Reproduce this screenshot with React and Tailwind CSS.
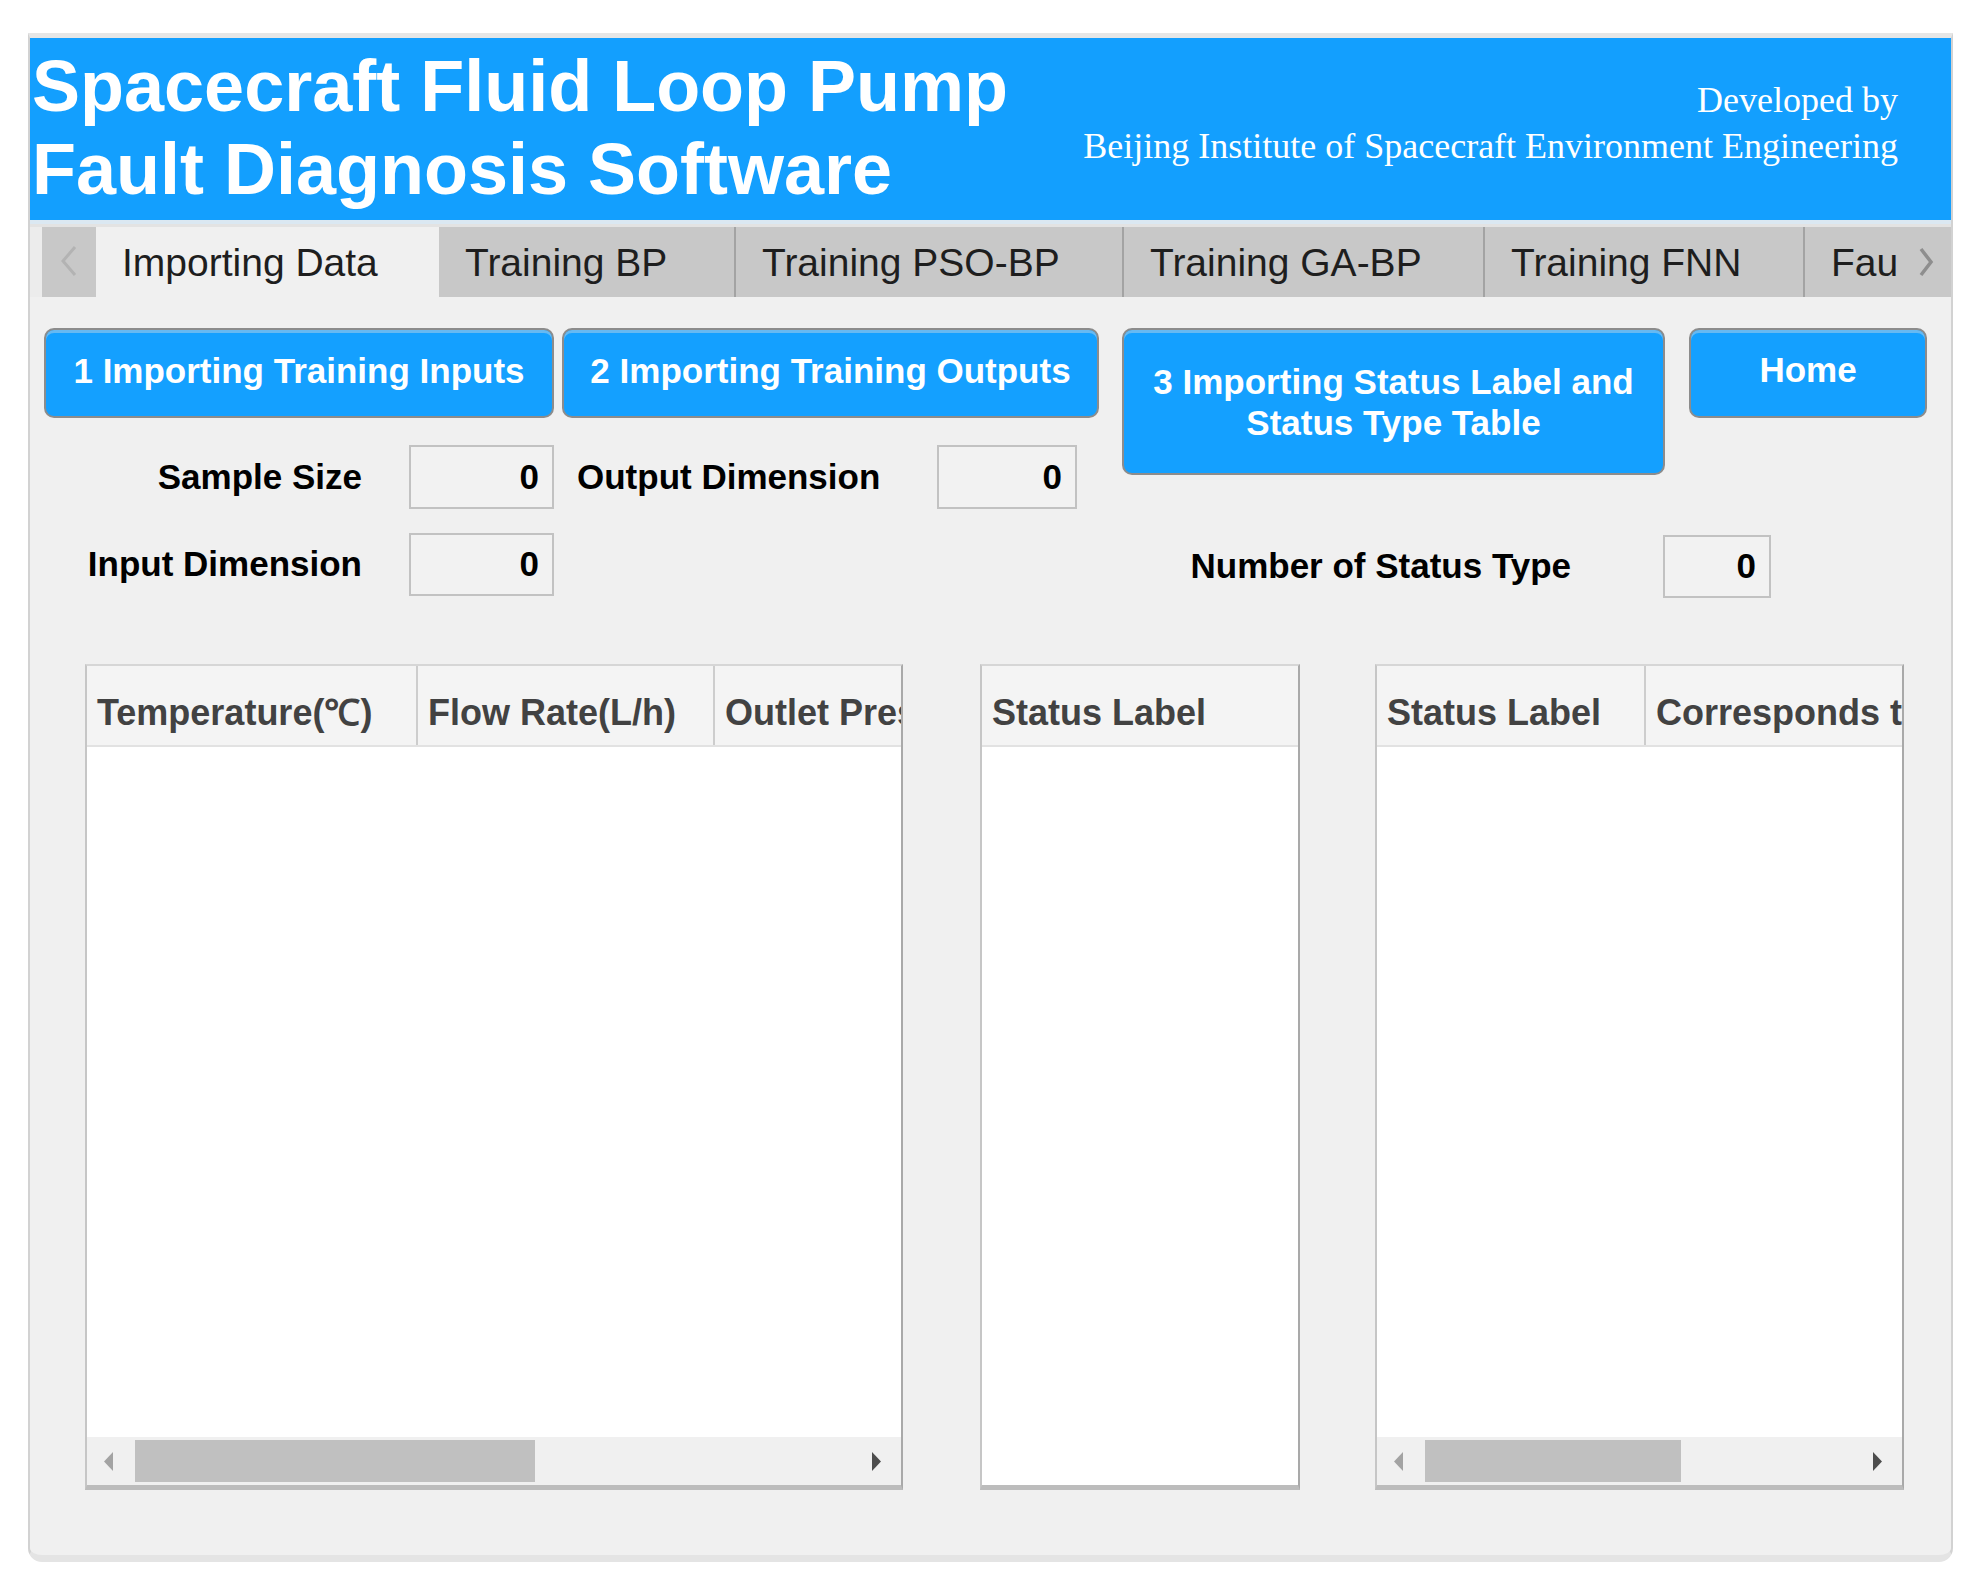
import React from "react";

const sans = { fontFamily: '"Liberation Sans", Arial, sans-serif' };

const tabs = [
  { label: "Importing Data", w: "w-[343px]", active: true },
  { label: "Training BP", w: "w-[295px]" },
  { label: "Training PSO-BP", w: "w-[388px]", divider: true },
  { label: "Training GA-BP", w: "w-[361px]", divider: true },
  { label: "Training FNN", w: "w-[320px]", divider: true },
];

const BlueButton = ({ className, children }) => (
  <div
    className={
      "flex items-center justify-center rounded-[10px] border-2 border-[#8c8c8c] bg-[#14a0ff] text-center text-[35px] font-bold text-white shadow-[inset_0_3px_0_#66b9f2] " +
      className
    }
  >
    {children}
  </div>
);

const NumBox = ({ className }) => (
  <div
    className={
      "flex items-center justify-end border-2 border-[#c2c2c2] bg-[#f2f2f2] pr-[13px] text-[35px] font-bold text-black " +
      className
    }
  >
    0
  </div>
);

const ScrollBar = ({ thumb }) => (
  <div className="flex h-[48px] items-center bg-[#f0f0f0]">
    <svg width="10" height="23" viewBox="0 0 10 23" className="ml-[17px] shrink-0">
      <polygon points="9,2 0,11.5 9,21" fill="#a3a3a3" />
    </svg>
    <div className={"ml-[21px] h-[42px] bg-[#c0c0c0] " + thumb} />
    <div className="flex-1" />
    <svg width="10" height="23" viewBox="0 0 10 23" className="mr-[20px] shrink-0">
      <polygon points="1,2 10,11.5 1,21" fill="#4d4d4d" />
    </svg>
  </div>
);

const Table = ({ className, cols, last, thumb }) => (
  <div
    className={
      "flex h-[826px] flex-col border-l-2 border-t-2 border-r-2 border-b-[5px] border-l-[#c6c6c6] border-t-[#d6d6d6] border-r-[#a9a9a9] border-b-[#bcbcbc] bg-white " +
      className
    }
  >
    <div className="flex h-[81px] shrink-0 border-b-2 border-[#e2e2e2] bg-[#f4f4f4] text-[36px] font-bold text-[#424242]">
      {cols.map((c) => (
        <div
          key={c.label}
          className={"flex shrink-0 items-center overflow-hidden whitespace-nowrap border-r-2 border-[#cdcdcd] pl-[10px] pt-[14px] " + c.w}
        >
          {c.label}
        </div>
      ))}
      {last && (
        <div className="flex min-w-0 flex-1 items-center overflow-hidden whitespace-nowrap pl-[10px] pt-[14px]">
          {last}
        </div>
      )}
    </div>
    <div className="flex-1 bg-white" />
    {thumb && <ScrollBar thumb={thumb} />}
  </div>
);

export default function App() {
  return (
    <div className="h-[1589px] w-[1983px] bg-white pl-[28px] pt-[33px]" style={sans}>
      <div className="flex h-[1529px] w-[1925px] flex-col overflow-hidden rounded-b-[14px] border-x-2 border-b-[7px] border-t-[5px] border-x-[#d2d2d2] border-b-[#e4e4e4] border-t-[#e6e6e6] bg-[#f0f0f0]">
        {/* Title bar */}
        <div className="flex h-[182px] shrink-0 justify-between bg-[#139ffe] text-white">
          <div className="pl-[2px] pt-[7px] text-[72px] font-bold leading-[83px]">
            <div>Spacecraft Fluid Loop Pump</div>
            <div>Fault Diagnosis Software</div>
          </div>
          <div
            className="pr-[53px] pt-[39px] text-right text-[36px] leading-[46px]"
            style={{ fontFamily: '"Liberation Serif", "Times New Roman", serif' }}
          >
            <div>Developed by</div>
            <div>Beijing Institute of Spacecraft Environment Engineering</div>
          </div>
        </div>

        {/* Tabs */}
        <div className="h-[7px] shrink-0 border-t-4 border-[#dbe8f2] bg-[#e3e3e3]" />
        <div className="flex h-[70px] shrink-0 bg-[#c8c8c8] pl-[12px]" style={{ boxShadow: "inset 12px 0 0 #ececec" }}>
          <div className="flex h-[68px] w-[54px] shrink-0 items-center justify-center bg-[#c8c8c8]">
            <svg width="20" height="34" viewBox="0 0 20 34">
              <polyline points="16,3 4,17 16,31" fill="none" stroke="#b3b3b3" strokeWidth="3" />
            </svg>
          </div>
          {tabs.map((t) => (
            <div
              key={t.label}
              className={
                "flex shrink-0 items-center whitespace-nowrap pl-[26px] pt-[3px] text-[39px] text-[#1e1e1e] " +
                t.w +
                (t.active ? " bg-[#f0f0f0]" : " bg-[#c8c8c8]") +
                (t.divider ? " border-l-2 border-[#a3a3a3]" : "")
              }
            >
              {t.label}
            </div>
          ))}
          <div className="flex min-w-0 flex-1 items-center overflow-hidden whitespace-nowrap border-l-2 border-[#a3a3a3] pl-[26px] pt-[3px] text-[39px] text-[#1e1e1e]">
            Fault Diagnosis
          </div>
          <div className="flex w-[54px] shrink-0 items-center bg-[#c8c8c8] pl-[20px]">
            <svg width="18" height="32" viewBox="0 0 18 32">
              <polyline points="4,3 14,16 4,29" fill="none" stroke="#8e8e8e" strokeWidth="3.5" />
            </svg>
          </div>
        </div>

        {/* Content */}
        <div className="flex flex-1 flex-col pl-[14px] pt-[31px]">
          <div className="flex items-start">
            {/* left block */}
            <div className="flex w-[1055px] flex-col">
              <div className="flex gap-[8px]">
                <BlueButton className="h-[90px] w-[510px] pb-[3px]">1 Importing Training Inputs</BlueButton>
                <BlueButton className="h-[90px] w-[537px] pb-[3px]">2 Importing Training Outputs</BlueButton>
              </div>
              <div className="mt-[27px] flex items-center text-[35px] font-bold text-black">
                <div className="w-[318px] text-right">Sample Size</div>
                <NumBox className="ml-[47px] h-[64px] w-[145px]" />
                <div className="ml-[23px] w-[360px]">Output Dimension</div>
                <NumBox className="h-[64px] w-[140px]" />
              </div>
              <div className="mt-[24px] flex items-center text-[35px] font-bold text-black">
                <div className="w-[318px] text-right">Input Dimension</div>
                <NumBox className="ml-[47px] h-[63px] w-[145px]" />
              </div>
            </div>
            {/* right block */}
            <div className="ml-[23px] flex flex-col">
              <div className="flex items-start gap-[24px]">
                <BlueButton className="h-[147px] w-[543px] leading-[41px]">
                  <div>
                    <div>3 Importing Status Label and</div>
                    <div>Status Type Table</div>
                  </div>
                </BlueButton>
                <BlueButton className="h-[90px] w-[238px] pb-[6px]">Home</BlueButton>
              </div>
              <div className="mt-[60px] flex items-center text-[35px] font-bold text-black">
                <div className="w-[449px] text-right">Number of Status Type</div>
                <NumBox className="ml-[92px] h-[63px] w-[108px]" />
              </div>
            </div>
          </div>

          {/* Tables */}
          <div className="ml-[41px] mt-[66px] flex">
            <Table
              className="w-[818px]"
              cols={[
                { label: "Temperature(℃)", w: "w-[331px]" },
                { label: "Flow Rate(L/h)", w: "w-[297px]" },
              ]}
              last="Outlet Pressure(kPa)"
              thumb="w-[400px]"
            />
            <Table className="ml-[77px] w-[320px]" cols={[]} last="Status Label" />
            <Table
              className="ml-[75px] w-[529px]"
              cols={[{ label: "Status Label", w: "w-[269px]" }]}
              last="Corresponds to Status Type"
              thumb="w-[256px]"
            />
          </div>
        </div>
      </div>
    </div>
  );
}
